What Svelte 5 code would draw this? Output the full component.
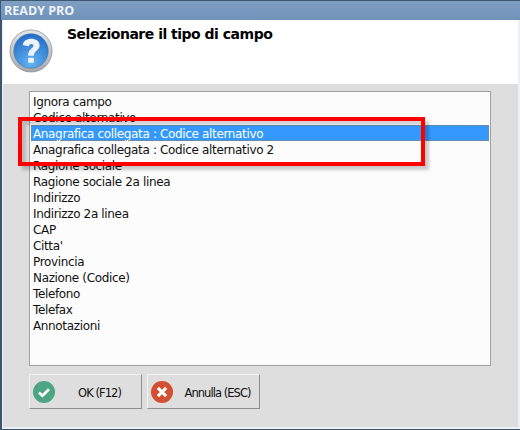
<script>
  let fields = [
    'Ignora campo',
    'Codice alternativo',
    'Anagrafica collegata : Codice alternativo',
    'Anagrafica collegata : Codice alternativo 2',
    'Ragione sociale',
    'Ragione sociale 2a linea',
    'Indirizzo',
    'Indirizzo 2a linea',
    'CAP',
    "Citta'",
    'Provincia',
    'Nazione (Codice)',
    'Telefono',
    'Telefax',
    'Annotazioni'
  ];
  let selected = 2;
</script>

<main>
  <div class="titlebar">READY PRO</div>
  <div class="frame">
    <div class="header">
      <svg class="help" width="44" height="44" viewBox="0 0 46 46">
        <defs>
          <linearGradient id="ring" x1="0" y1="0" x2="0" y2="1">
            <stop offset="0" stop-color="#e4e6e8" />
            <stop offset="1" stop-color="#a4a8ac" />
          </linearGradient>
          <radialGradient id="ball" cx="0.5" cy="0.85" r="0.9">
            <stop offset="0" stop-color="#63b4f2" />
            <stop offset="1" stop-color="#1f68c4" />
          </radialGradient>
        </defs>
        <circle cx="23" cy="23" r="22" fill="url(#ring)" stroke="#8b9096" stroke-width="0.8" />
        <circle cx="23" cy="23" r="18" fill="url(#ball)" stroke="#3f6fa8" stroke-width="0.6" />
        <path d="M14.5 17 C14.5 8 32 8 32 17 C32 22.5 26 22.5 26 28 L20 28 C20 20.5 25.5 20.5 25.5 17.5 C25.5 15 21 15 20.8 18 Z" fill="#eef2fc" />
        <rect x="20" y="30" width="6" height="5.4" rx="0.6" fill="#eef2fc" />
      </svg>
      <h1>Selezionare il tipo di campo</h1>
    </div>
    <div class="body">
      <ul class="list">
        {#each fields as field, i}
          <li class:selected={i === selected}>{field}</li>
        {/each}
      </ul>
      <div class="buttons">
        <button type="button">
          <svg width="22" height="22" viewBox="0 0 24 24">
            <circle cx="12" cy="12" r="12" fill="#4ea585" />
            <path d="M6.5 12.5 L10.3 16 L17.5 9" fill="none" stroke="#fff" stroke-width="3" />
          </svg>
          <span>OK (F12)</span>
        </button>
        <button type="button">
          <svg width="22" height="22" viewBox="0 0 24 24">
            <circle cx="12" cy="12" r="12" fill="#d24f33" />
            <path d="M7.5 7.5 L16.5 16.5 M16.5 7.5 L7.5 16.5" fill="none" stroke="#fff" stroke-width="3.2" />
          </svg>
          <span>Annulla (ESC)</span>
        </button>
      </div>
    </div>
  </div>
  <div class="callout"></div>
</main>

<style>
  :global(body) { margin: 0; background: #fff; }
  main {
    position: relative;
    width: 520px;
    height: 430px;
    box-sizing: border-box;
    display: flex;
    flex-direction: column;
    background: #3c566f;
    padding: 1px 0 1px 1px;
    font-family: "DejaVu Sans", sans-serif;
    font-size: 12px;
    color: #111;
    overflow: hidden;
  }
  .titlebar {
    height: 19px;
    flex: none;
    box-sizing: border-box;
    padding: 1px 0 0 3px;
    background: linear-gradient(#7f9fc3, #6f92b8);
    color: #eef3f9;
    font-family: "Open Sans", sans-serif;
    font-weight: 700;
    font-size: 12.5px;
    line-height: 17px;
  }
  .frame {
    flex: 1;
    margin-left: 1px;
    border-left: 1px solid #eef1f4;
    border-right: 2px solid #eef1f4;
    border-bottom: 2px solid #eef1f4;
    display: flex;
    flex-direction: column;
    min-height: 0;
  }
  .header {
    height: 64px;
    flex: none;
    display: flex;
    background: #fff;
    box-sizing: border-box;
    padding: 9px 0 0 6px;
    gap: 14px;
  }
  h1 {
    margin: -3px 0 0;
    font-family: "DejaVu Sans", sans-serif;
    font-size: 14px;
    font-weight: 700;
    line-height: 16px;
    color: #000;
    letter-spacing: -0.5px;
  }
  .body {
    flex: 1;
    background: #dedede;
    padding: 7px 27px 0 26px;
  }
  .list {
    list-style: none;
    margin: 0;
    padding: 1px;
    height: 275px;
    box-sizing: border-box;
    border: 1px solid #a0a0a0;
    background: #fcfcfc;
  }
  li {
    height: 16px;
    line-height: 18px;
    padding-left: 2px;
    white-space: nowrap;
    letter-spacing: -0.35px;
  }
  li.selected {
    background: #3399ff;
    color: #fff;
    outline: 1px dotted rgba(190, 120, 50, 0.75);
    outline-offset: -1px;
  }
  .buttons {
    display: flex;
    gap: 5px;
    margin-top: 8px;
  }
  button {
    width: 113px;
    height: 35px;
    box-sizing: border-box;
    padding: 0 0 0 3px;
    display: flex;
    align-items: center;
    background: #dedede;
    border: 1px solid;
    border-color: #f2f2f2 #8e8e8e #8e8e8e #f2f2f2;
    font: inherit;
    font-size: 11.5px;
    color: #111;
  }
  button span { flex: 1; text-align: center; letter-spacing: -0.95px; padding: 2px 0 0 3px; }
  .callout {
    position: absolute;
    left: 18px;
    top: 117px;
    width: 407px;
    height: 49px;
    box-sizing: border-box;
    border: 4px solid #f00;
    box-shadow: 4px 4px 3px rgba(0, 0, 0, 0.2), inset 4px 4px 3px rgba(0, 0, 0, 0.16);
  }
</style>
